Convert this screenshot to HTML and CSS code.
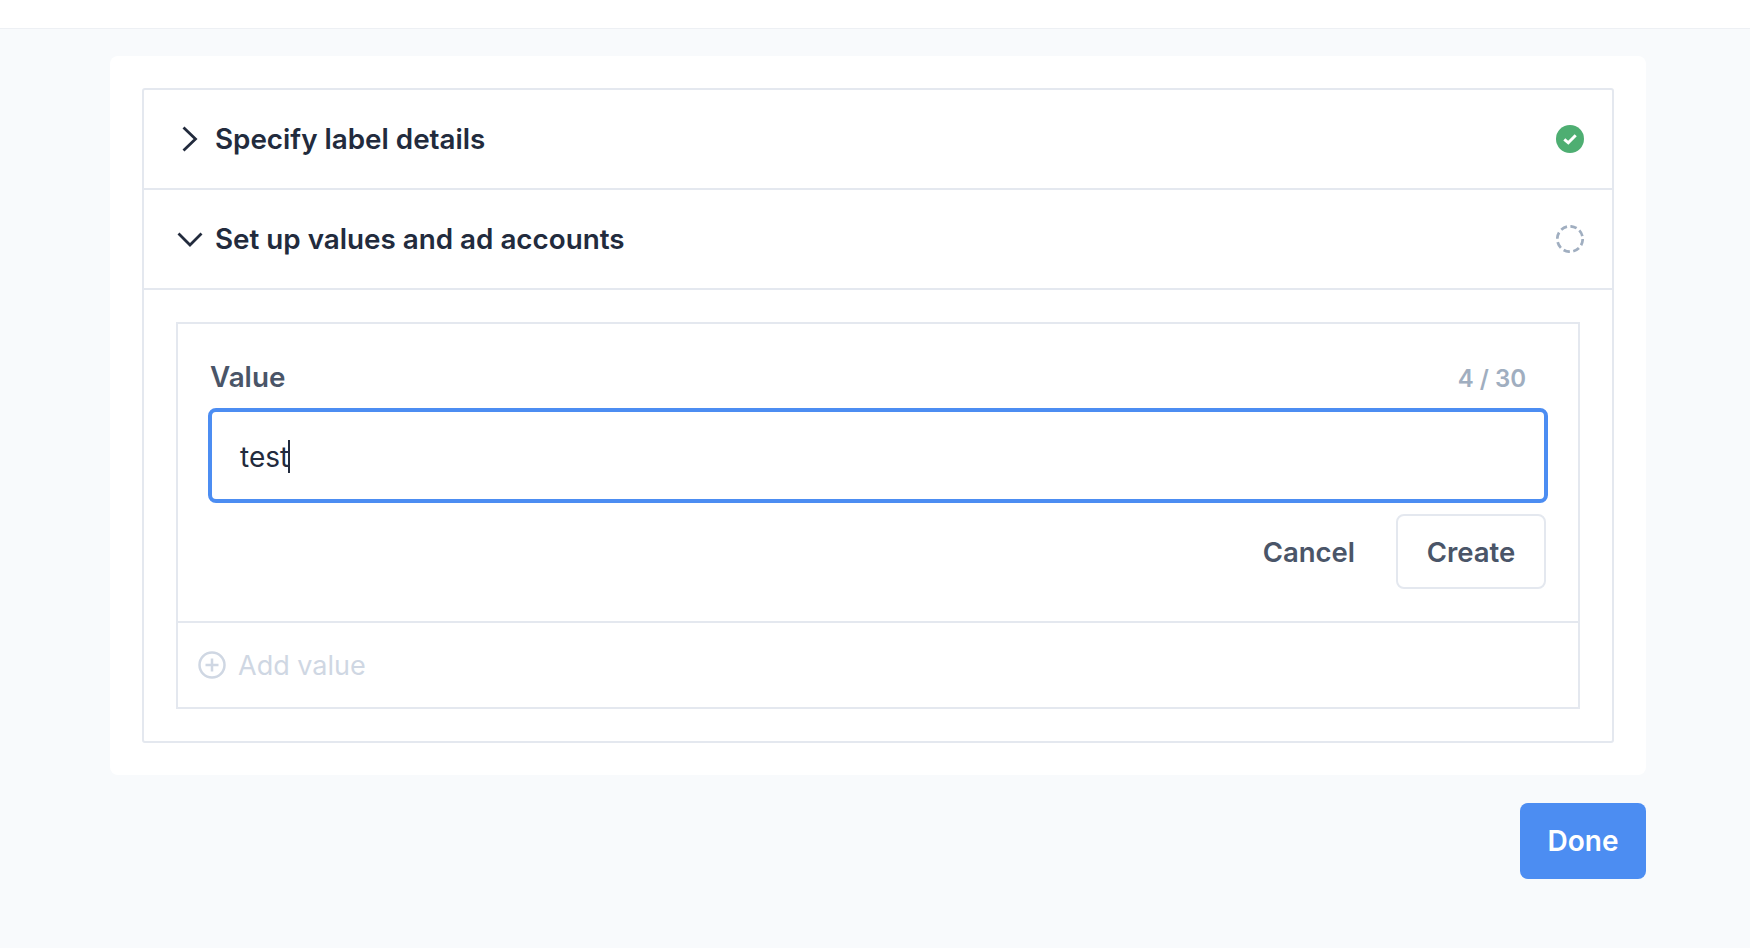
FILE: index.html
```html
<!DOCTYPE html>
<html lang="en">
<head>
<meta charset="utf-8">
<title>Set up label</title>
<link rel="stylesheet" href="styles.css">
</head>
<body>
<header class="topbar"></header>
<main class="page">
  <section class="card">
    <div class="accordion">
      <div class="row">
        <svg class="chev" width="32" height="32" viewBox="0 0 32 32"><path d="M9.500 4.500 L21.500 16 L9.500 27.500"/></svg>
        <span class="row-title">Specify label details</span>
        <svg class="status" width="28" height="28" viewBox="0 0 28 28"><circle cx="14" cy="14" r="14" fill="#4eae72"/><path d="M8.300 14.300 L12.300 17.800 L19.700 10.300" fill="none" stroke="#fff" stroke-width="3"/></svg>
      </div>
      <div class="row">
        <svg class="chev" width="32" height="32" viewBox="0 0 32 32"><path d="M4.500 10.500 L16 22 L27.500 10.500"/></svg>
        <span class="row-title">Set up values and ad accounts</span>
        <svg class="status" width="28" height="28" viewBox="0 0 28 28"><circle cx="14" cy="14" r="12.700" fill="none" stroke="#a0aec0" stroke-width="2.700" stroke-dasharray="6.500 3.480"/></svg>
      </div>
      <div class="panel">
        <div class="values">
          <div class="form">
            <div class="label-row">
              <span class="label">Value</span>
              <span class="count">4 / 30</span>
            </div>
            <div class="input"><span class="input-text">test</span><span class="caret"></span></div>
            <div class="actions">
              <button class="btn-plain">Cancel</button>
              <button class="btn-outline">Create</button>
            </div>
          </div>
          <div class="add">
            <svg width="28" height="28" viewBox="0 0 28 28" fill="none" stroke="#cfd7e3" stroke-width="2.500"><circle cx="14" cy="14" r="12.500"/><path d="M14 7.500V20.500M7.500 14H20.500"/></svg>
            <span>Add value</span>
          </div>
        </div>
      </div>
    </div>
  </section>
  <div class="footer"><button class="btn-primary">Done</button></div>
</main>
</body>
</html>
```
FILE: styles.css
```css
* { box-sizing: border-box; }
html, body { margin: 0; height: 100%; }
body {
  background: #f8fafc;
  font-family: Inter, "Liberation Sans", sans-serif;
  color: #222b3d;
  overflow: hidden;
}
button { font: inherit; cursor: pointer; }
.topbar {
  height: 29px;
  background: #fff;
  border-bottom: 1px solid #edf0f4;
}
.page {
  width: 1536px;
  margin: 27px 0 0 110px;
}
.card {
  background: #fff;
  border-radius: 8px;
  padding: 32px;
}
.accordion {
  border: 2px solid #e4e8ef;
  border-radius: 3px;
}
.row {
  display: flex;
  align-items: center;
  height: 100px;
  padding: 0 28px 0 30px;
  border-bottom: 2px solid #e4e8ef;
}
.chev {
  flex: none;
  fill: none;
  stroke: #222b3d;
  stroke-width: 2.800;
  margin-right: 9px;
}
.row-title {
  flex: 1;
  font-size: 27.800px;
  font-weight: 560;
  line-height: 36px;
}
.status { flex: none; }
.panel { padding: 32px; }
.values { border: 2px solid #e4e8ef; }
.form {
  padding: 32px 32px 32px;
  border-bottom: 2px solid #e4e8ef;
}
.label-row {
  display: flex;
  justify-content: space-between;
  align-items: center;
  height: 42px;
  margin-bottom: 10px;
  padding-right: 20px;
}
.label {
  font-size: 27.800px;
  font-weight: 560;
  color: #4a5568;
}
.count {
  margin-top: 2px;
  font-size: 24px;
  font-weight: 560;
  color: #a0aec0;
}
.input {
  display: flex;
  align-items: center;
  height: 95px;
  margin: 0 -2px;
  padding: 2px 28px 0;
  border: 4px solid #4c8df2;
  border-radius: 8px;
  font-size: 28px;
}
.caret {
  width: 2px;
  height: 33px;
  margin-left: -1px;
  background: #222b3d;
}
.actions {
  display: flex;
  justify-content: flex-end;
  align-items: center;
  gap: 41px;
  margin-top: 11px;
  height: 75px;
}
.btn-plain, .btn-outline {
  font-size: 27.500px;
  font-weight: 560;
  color: #4a5568;
  background: #fff;
}
.btn-plain { border: 0; padding: 0; }
.btn-outline {
  width: 150px;
  height: 75px;
  border: 2px solid #e4e8ef;
  border-radius: 8px;
}
.add {
  display: flex;
  align-items: center;
  gap: 12px;
  height: 84px;
  padding-left: 20px;
  font-size: 27px;
  color: #cfd7e3;
}
.footer {
  display: flex;
  justify-content: flex-end;
  margin-top: 28px;
}
.btn-primary {
  width: 126px;
  height: 76px;
  border: 0;
  border-radius: 8px;
  background: #4c8df2;
  color: #fff;
  font-size: 28px;
  font-weight: 560;
}
```
